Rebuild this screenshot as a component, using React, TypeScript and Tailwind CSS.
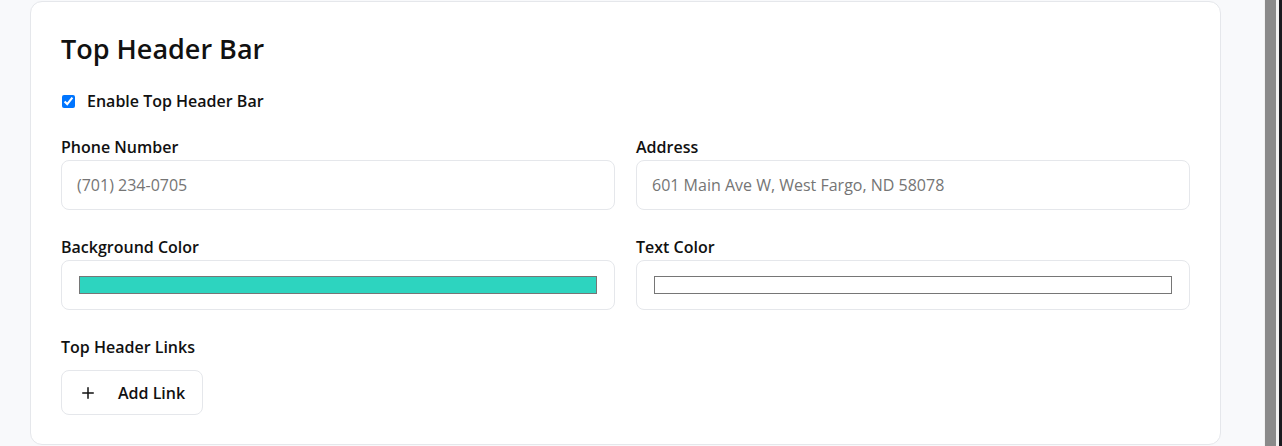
import { Plus } from "lucide-react";

function Field({ label, placeholder }: { label: string; placeholder: string }) {
  return (
    <div className="flex flex-col">
      <label className="text-[16px] leading-6 font-semibold text-[#111] mb-px">{label}</label>
      <div className="h-[50px] rounded-lg border border-[#e5e7eb] bg-white px-[15px] flex items-center">
        <span className="text-[16px] text-[#757575]">{placeholder}</span>
      </div>
    </div>
  );
}

function ColorField({ label, color }: { label: string; color: string }) {
  return (
    <div className="flex flex-col">
      <label className="text-[16px] leading-6 font-semibold text-[#111] mb-px">{label}</label>
      <div className="h-[50px] rounded-lg border border-[#e5e7eb] bg-white px-[17px] flex items-center">
        <div className={`h-[18px] w-full border border-[#767676] ${color}`} />
      </div>
    </div>
  );
}

export default function App() {
  return (
    <div
      className="flex h-[446px] w-full bg-[#f8f9fb] overflow-hidden"
      style={{ fontFamily: '"Open Sans", "Noto Sans", sans-serif' }}
    >
      <div className="flex-1 pl-[30px] pr-[43px] pt-px">
        <div className="h-[444px] rounded-xl border border-[#e5e7eb] bg-white px-[30px] pt-[29px]">
          <h2 className="text-[27px] leading-9 font-semibold text-[#111]">Top Header Bar</h2>

          <label className="mt-[22px] flex items-center gap-3 text-[16px] font-semibold text-[#111]">
            <input type="checkbox" defaultChecked className="w-[13px] h-[13px] ml-px accent-[#0075ff]" />
            Enable Top Header Bar
          </label>

          <div className="mt-[22px] grid grid-cols-2 gap-x-[21px] gap-y-[25px]">
            <Field label="Phone Number" placeholder="(701) 234-0705" />
            <Field label="Address" placeholder="601 Main Ave W, West Fargo, ND 58078" />
            <ColorField label="Background Color" color="bg-[#2dd4bf]" />
            <ColorField label="Text Color" color="bg-white" />
          </div>

          <div className="mt-[25px] text-[16px] leading-6 font-semibold text-[#111]">Top Header Links</div>
          <button className="mt-[11px] h-[45px] w-[142px] rounded-lg border border-[#e5e7eb] bg-white flex items-center pl-[17px] gap-[21px] text-[16px] font-semibold text-[#111]">
            <Plus size={18} strokeWidth={2} className="text-[#111]" />
            Add Link
          </button>
        </div>
      </div>
      <div className="w-[18px] h-full flex">
        <div className="w-px bg-[#f1f1f1]" />
        <div className="w-[11px] bg-[#8a8a8a]" />
        <div className="w-[3px] bg-[#f1f1f1]" />
        <div className="w-[3px] bg-[#1a1a1f]" />
      </div>
    </div>
  );
}
